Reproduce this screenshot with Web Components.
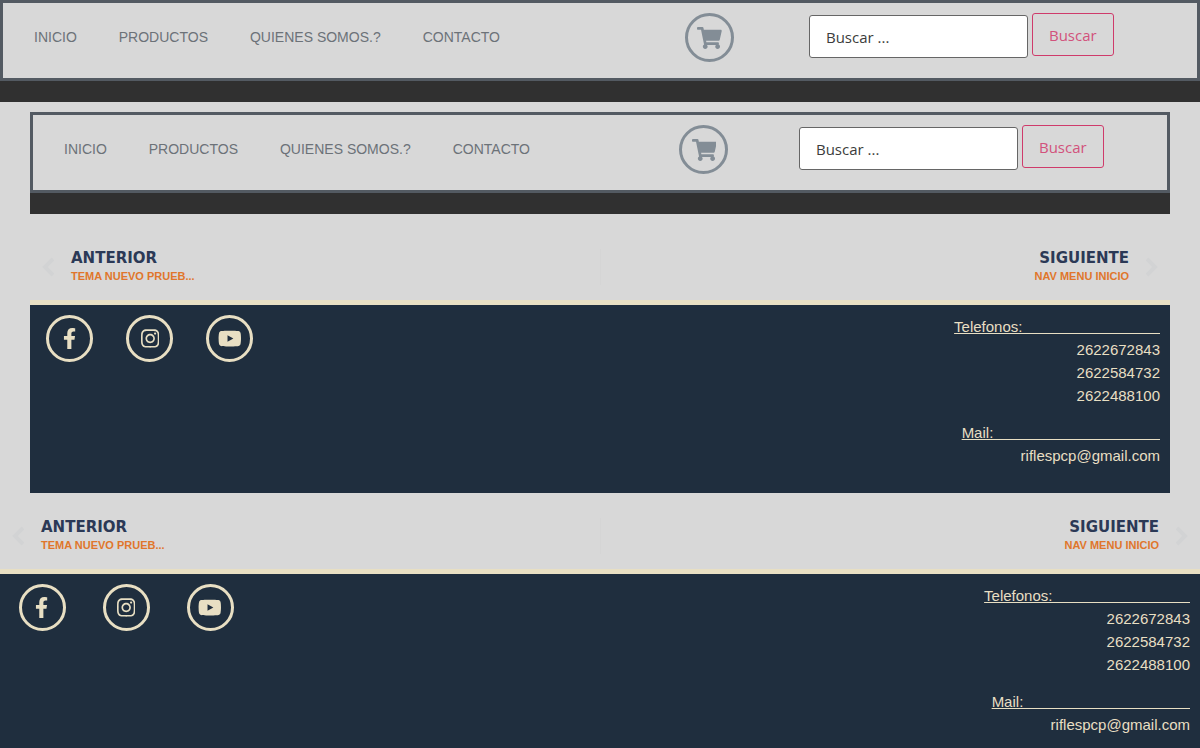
<!DOCTYPE html>
<html lang="es">
<head>
<meta charset="utf-8">
<meta name="viewport" content="width=device-width, initial-scale=1">
<title>Inicio</title>
<style>
    body {
        margin: 0;
        background: #d8d8d8;
        font-family: "Liberation Sans", Arial, sans-serif;
    }
    main {
        padding: 10px 30px 0;
    }
    main site-header {
        margin-bottom: 10px;
    }
</style>
</head>
<body>

<site-header></site-header>
<main>
    <site-header></site-header>
    <post-nav>
        <span slot="prev">TEMA NUEVO PRUEB...</span>
        <span slot="next">NAV MENU INICIO</span>
    </post-nav>
    <site-footer></site-footer>
</main>
<post-nav>
    <span slot="prev">TEMA NUEVO PRUEB...</span>
    <span slot="next">NAV MENU INICIO</span>
</post-nav>
<site-footer></site-footer>

<script>
const icons = {
    cart: ['0 0 576 512', 'M528.12 301.319l47.273-208C578.806 78.301 567.391 64 551.99 64H159.208l-9.166-44.81C147.758 8.021 137.93 0 126.529 0H24C10.745 0 0 10.745 0 24v16c0 13.255 10.745 24 24 24h69.883l70.248 343.435C147.325 417.1 136 435.222 136 456c0 30.928 25.072 56 56 56s56-25.072 56-56c0-15.674-6.447-29.835-16.824-40h209.647C430.447 426.165 424 440.326 424 456c0 30.928 25.072 56 56 56s56-25.072 56-56c0-22.172-12.888-41.332-31.579-50.405l5.517-24.276c3.413-15.018-8.002-29.319-23.403-29.319H218.117l-6.545-32h293.145c11.206 0 20.92-7.754 23.403-18.681z'],
    facebook: ['0 0 320 512', 'M279.14 288l14.22-92.66h-88.91v-60.13c0-25.35 12.42-50.06 52.24-50.06h40.42V6.26S260.43 0 225.36 0c-73.22 0-121.08 44.38-121.08 124.72v70.62H22.89V288h81.39v224h100.17V288z'],
    instagram: ['0 0 448 512', 'M224.1 141c-63.6 0-114.9 51.3-114.9 114.9s51.3 114.9 114.9 114.9S339 319.5 339 255.9 287.7 141 224.1 141zm0 189.6c-41.1 0-74.7-33.5-74.7-74.7s33.5-74.7 74.7-74.7 74.7 33.5 74.7 74.7-33.6 74.7-74.7 74.7zm146.4-194.3c0 14.9-12 26.8-26.8 26.8-14.9 0-26.8-12-26.8-26.8s12-26.8 26.8-26.8 26.8 12 26.8 26.8zm76.1 27.2c-1.7-35.9-9.9-67.7-36.2-93.9-26.2-26.2-58-34.4-93.9-36.2-37-2.1-147.9-2.1-184.9 0-35.8 1.7-67.6 9.9-93.9 36.1s-34.4 58-36.2 93.9c-2.1 37-2.1 147.9 0 184.9 1.7 35.9 9.9 67.7 36.2 93.9s58 34.4 93.9 36.2c37 2.1 147.9 2.1 184.9 0 35.9-1.7 67.7-9.9 93.9-36.2 26.2-26.2 34.4-58 36.2-93.9 2.1-37 2.1-147.8 0-184.8zM398.8 388c-7.8 19.6-22.9 34.7-42.6 42.6-29.5 11.7-99.5 9-132.1 9s-102.7 2.6-132.1-9c-19.6-7.8-34.7-22.9-42.6-42.6-11.7-29.5-9-99.5-9-132.1s-2.6-102.7 9-132.1c7.8-19.6 22.9-34.7 42.6-42.6 29.5-11.7 99.5-9 132.1-9s102.7-2.6 132.1 9c19.6 7.8 34.7 22.9 42.6 42.6 11.7 29.5 9 99.5 9 132.1s2.7 102.7-9 132.1z'],
    youtube: ['0 0 576 512', 'M549.655 124.083c-6.281-23.65-24.787-42.276-48.284-48.597C458.781 64 288 64 288 64S117.22 64 74.629 75.486c-23.497 6.322-42.003 24.947-48.284 48.597-11.412 42.867-11.412 132.305-11.412 132.305s0 89.438 11.412 132.305c6.281 23.65 24.787 41.5 48.284 47.821C117.22 448 288 448 288 448s170.78 0 213.371-11.486c23.497-6.321 42.003-24.171 48.284-47.821 11.412-42.867 11.412-132.305 11.412-132.305s0-89.438-11.412-132.305zm-317.51 213.508V175.185l142.739 81.205-142.739 81.201z']
};

class RoundIcon extends HTMLElement {
    constructor() {
        super();
        this.shadowDOM = this.attachShadow({mode: "open"});
    }
    connectedCallback() {
        this.render();
    }

    render() {
        const [box, path] = icons[this.getAttribute("name")];
        this.shadowDOM.innerHTML = `
        <style>
            :host {
                display: block;
            }
            a {
                display: flex;
                align-items: center;
                justify-content: center;
                box-sizing: border-box;
                width: var(--size, 47px);
                height: var(--size, 47px);
                border: 3px solid;
                border-radius: 50%;
                color: inherit;
            }
            svg {
                height: var(--glyph, 21px);
                fill: currentColor;
            }
        </style>
        <a href="#" aria-label="${this.getAttribute("label")}">
            <svg viewBox="${box}" aria-hidden="true"><path d="${path}"/></svg>
        </a>
        `;
    }
}
customElements.define("round-icon", RoundIcon);

class SearchForm extends HTMLElement {
    constructor() {
        super();
        this.shadowDOM = this.attachShadow({mode: "open"});
    }
    connectedCallback() {
        this.render();
    }

    render() {
        this.shadowDOM.innerHTML = `
        <style>
            * {
                box-sizing: border-box;
            }
            :host {
                display: block;
            }
            form {
                display: flex;
                gap: 4px;
                margin: 0;
            }
            input, button {
                height: 43px;
                padding: 0 16px;
                border: 1px solid #666;
                border-radius: 3px;
                font: 15px "Open Sans", "Noto Sans", sans-serif;
            }
            input {
                width: 219px;
                min-width: 0;
                margin-top: 2px;
                background: #fff;
            }
            input::placeholder {
                color: #3c3c3c;
                opacity: 1;
            }
            button {
                background: transparent;
                border-color: #cf3b6b;
                color: #d2527c;
            }
        </style>
        <form role="search">
            <input type="search" placeholder="Buscar ..." aria-label="Buscar">
            <button type="button">Buscar</button>
        </form>
        `;
    }
}
customElements.define("search-form", SearchForm);

class SiteHeader extends HTMLElement {
    constructor() {
        super();
        this.shadowDOM = this.attachShadow({mode: "open"});
    }
    connectedCallback() {
        this.render();
    }

    render() {
        this.shadowDOM.innerHTML = `
        <style>
            :host {
                display: block;
                border-bottom: 21px solid #303030;
            }
            header {
                display: grid;
                grid-template-columns: 31fr 9fr 20fr;
                padding: 10px 0 16px;
                border: 3px solid #535a62;
            }
            nav {
                display: flex;
                align-items: center;
                gap: 42px;
                padding: 0 0 2px 31px;
                font-size: 14px;
                white-space: nowrap;
            }
            nav a {
                color: #6c7278;
                text-decoration: none;
            }
            round-icon {
                --size: 49px;
                --glyph: 22px;
                justify-self: center;
                color: #838d96;
            }
            search-form {
                padding-left: 10px;
            }
        </style>
        <header>
            <nav>
                <a href="#">INICIO</a>
                <a href="#">PRODUCTOS</a>
                <a href="#">QUIENES SOMOS.?</a>
                <a href="#">CONTACTO</a>
            </nav>
            <round-icon name="cart" label="Carrito"></round-icon>
            <search-form></search-form>
        </header>
        `;
    }
}
customElements.define("site-header", SiteHeader);

class PostNav extends HTMLElement {
    constructor() {
        super();
        this.shadowDOM = this.attachShadow({mode: "open"});
    }
    connectedCallback() {
        this.render();
    }

    render() {
        this.shadowDOM.innerHTML = `
        <style>
            :host {
                display: block;
            }
            nav {
                display: grid;
                grid-template-columns: 1fr 1px 1fr;
                padding: 25px 12px 15px;
            }
            a {
                display: flex;
                align-items: center;
                gap: 17px;
                text-decoration: none;
            }
            .next {
                justify-content: flex-end;
                text-align: right;
            }
            svg {
                width: 12px;
                height: 20px;
                fill: none;
                stroke: #d2d3d4;
                stroke-width: 4;
            }
            .line {
                background: #d5d5d5;
            }
            a > span {
                display: grid;
            }
            b {
                color: #2b3956;
                font: bold 15px/18px "DejaVu Sans", sans-serif;
            }
            slot {
                display: block;
                color: #e0762b;
                font-size: 11px;
                font-weight: bold;
                line-height: 18px;
            }
        </style>
        <nav>
            <a href="#">
                <svg viewBox="0 0 12 20" aria-hidden="true"><path d="M11 2L3 10l8 8"/></svg>
                <span><b>ANTERIOR</b><slot name="prev"></slot></span>
            </a>
            <div class="line"></div>
            <a class="next" href="#">
                <span><b>SIGUIENTE</b><slot name="next"></slot></span>
                <svg viewBox="0 0 12 20" aria-hidden="true"><path d="M1 2l8 8-8 8"/></svg>
            </a>
        </nav>
        `;
    }
}
customElements.define("post-nav", PostNav);

class SiteFooter extends HTMLElement {
    constructor() {
        super();
        this.shadowDOM = this.attachShadow({mode: "open"});
    }
    connectedCallback() {
        this.render();
    }

    render() {
        // the underline runs on past the title
        const phones = "Telefonos:".padEnd(43, "\u00a0");
        const mail = "Mail:".padEnd(45, "\u00a0");
        this.shadowDOM.innerHTML = `
        <style>
            :host {
                display: block;
                border-top: 5px solid #e8dfc3;
                background: #1f2e3e;
                color: #e8dfc3;
            }
            footer {
                display: grid;
                grid-template-columns: 7% 7% 7% 1fr;
                padding: 10px 0 12px;
            }
            round-icon {
                justify-self: center;
            }
            address {
                padding-right: 10px;
                font-size: 15px;
                font-style: normal;
                line-height: 23px;
                text-align: right;
            }
            p {
                margin: 0 0 14px;
            }
            p a {
                color: inherit;
                text-decoration: none;
            }
        </style>
        <footer>
            <round-icon name="facebook" label="Facebook"></round-icon>
            <round-icon name="instagram" label="Instagram"></round-icon>
            <round-icon name="youtube" label="Youtube"></round-icon>
            <address>
                <p>
                    <u>${phones}</u><br>
                    2622672843<br>
                    2622584732<br>
                    2622488100
                </p>
                <p>
                    <u>${mail}</u><br>
                    <a href="mailto:riflespcp@gmail.com">riflespcp@gmail.com</a>
                </p>
            </address>
        </footer>
        `;
    }
}
customElements.define("site-footer", SiteFooter);
</script>
</body>
</html>
